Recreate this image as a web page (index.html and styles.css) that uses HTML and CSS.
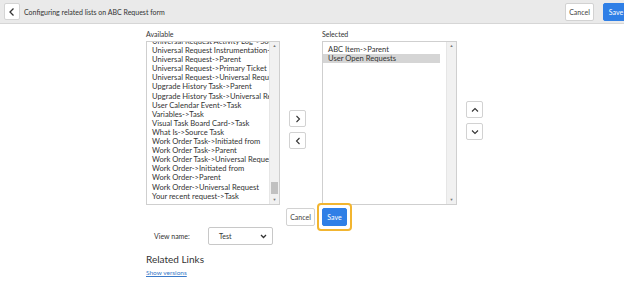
FILE: index.html
```html
<!DOCTYPE html>
<html>
<head>
    <title>Configuring related lists</title>
    <link rel="stylesheet" href="styles.css">
</head>
<body>
    <div class="header">
        <div class="back-btn">
            <svg width="8" height="10" viewBox="0 0 8 10"><path d="M5.5 1.5 L2 5 L5.5 8.5" fill="none" stroke="#333" stroke-width="1.3"/></svg>
        </div>
        <div class="title">Configuring related lists on ABC Request form</div>
        <div class="spacer"></div>
        <div class="btn btn-default">Cancel</div>
        <div class="btn btn-primary head-save">Save</div>
    </div>

    <div class="slushbucket">
        <div class="col col-available">
            <div class="col-label">Available</div>
            <div class="listbox">
                <div class="list">
                    <div class="list-inner scrolled">
                        <div class="item">Universal Request Activity Log->Source Task</div>
                        <div class="item">Universal Request Instrumentation->Primary Ticket</div>
                        <div class="item">Universal Request->Parent</div>
                        <div class="item">Universal Request->Primary Ticket</div>
                        <div class="item">Universal Request->Universal Request</div>
                        <div class="item">Upgrade History Task->Parent</div>
                        <div class="item">Upgrade History Task->Universal Request</div>
                        <div class="item">User Calendar Event->Task</div>
                        <div class="item">Variables->Task</div>
                        <div class="item">Visual Task Board Card->Task</div>
                        <div class="item">What Is->Source Task</div>
                        <div class="item">Work Order Task->Initiated from</div>
                        <div class="item">Work Order Task->Parent</div>
                        <div class="item">Work Order Task->Universal Request</div>
                        <div class="item">Work Order->Initiated from</div>
                        <div class="item">Work Order->Parent</div>
                        <div class="item">Work Order->Universal Request</div>
                        <div class="item">Your recent request->Task</div>
                    </div>
                </div>
                <div class="scrollbar">
                    <div class="sb-arrow">&#9650;</div>
                    <div class="sb-track"><div class="sb-thumb"></div></div>
                    <div class="sb-arrow">&#9660;</div>
                </div>
            </div>
        </div>

        <div class="move-btns">
            <div class="icon-btn">
                <svg width="8" height="8" viewBox="0 0 8 8"><path d="M2.5 1 L5.5 4 L2.5 7" fill="none" stroke="#333" stroke-width="1.1"/></svg>
            </div>
            <div class="icon-btn">
                <svg width="8" height="8" viewBox="0 0 8 8"><path d="M5.5 1 L2.5 4 L5.5 7" fill="none" stroke="#333" stroke-width="1.1"/></svg>
            </div>
        </div>

        <div class="col col-selected">
            <div class="col-label">Selected</div>
            <div class="listbox">
                <div class="list">
                    <div class="list-inner">
                        <div class="item">ABC Item->Parent</div>
                        <div class="item active">User Open Requests</div>
                    </div>
                </div>
                <div class="scrollbar">
                    <div class="sb-arrow">&#9650;</div>
                    <div class="sb-track"></div>
                    <div class="sb-arrow">&#9660;</div>
                </div>
            </div>
        </div>

        <div class="order-btns">
            <div class="icon-btn">
                <svg width="8" height="8" viewBox="0 0 8 8"><path d="M1 5.5 L4 2.5 L7 5.5" fill="none" stroke="#333" stroke-width="1.1"/></svg>
            </div>
            <div class="icon-btn">
                <svg width="8" height="8" viewBox="0 0 8 8"><path d="M1 2.5 L4 5.5 L7 2.5" fill="none" stroke="#333" stroke-width="1.1"/></svg>
            </div>
        </div>
    </div>

    <div class="form-actions">
        <div class="btn btn-default">Cancel</div>
        <div class="focus-ring">
            <div class="btn btn-primary">Save</div>
        </div>
    </div>

    <div class="view-row">
        <div class="view-label">View name:</div>
        <div class="view-select">
            <span>Test</span>
            <svg width="7" height="5" viewBox="0 0 7 5"><path d="M1 1 L3.5 3.5 L6 1" fill="none" stroke="#333" stroke-width="1.3"/></svg>
        </div>
    </div>

    <div class="related">
        <div class="related-title">Related Links</div>
        <a class="related-link" href="#">Show versions</a>
    </div>
</body>
</html>
```

FILE: styles.css
```css
body {
    margin: 0;
    padding: 0;
    width: 624px;
    height: 284px;
    overflow: hidden;
    background: #fff;
    font-family: Lato, "Open Sans", sans-serif;
    color: #333;
}
.header {
    height: 24px;
    background: #eaeaea;
    border-bottom: 1px solid #d6d6d6;
    display: flex;
    align-items: center;
    padding-left: 4px;
    box-sizing: border-box;
}
.back-btn {
    width: 16px;
    height: 17px;
    background: #fff;
    border: 1px solid #d4d4d4;
    border-radius: 2px;
    display: flex;
    align-items: center;
    justify-content: center;
    box-sizing: border-box;
}
.title {
    margin-left: 4px;
    font-size: 7px;
    color: #333;
}
.spacer {
    flex: 1;
}
.btn {
    height: 18px;
    box-sizing: border-box;
    display: flex;
    align-items: center;
    justify-content: center;
    font-size: 7px;
    border-radius: 2px;
}
.btn-default {
    width: 29px;
    background: #fff;
    border: 1px solid #d2d2d2;
    color: #444;
}
.btn-primary {
    width: 25px;
    background: #2f7fe6;
    border: 1px solid #2f7fe6;
    color: #fff;
}
.head-save {
    margin-left: 9px;
    width: 26px;
    margin-right: -5px;
}
.slushbucket {
    display: flex;
    padding-left: 146px;
    margin-top: 3px;
}
.col-label {
    font-size: 7px;
    height: 14px;
    line-height: 14px;
    color: #333;
}
.col-available {
    width: 134px;
}
.col-selected {
    width: 135px;
    margin-left: 16px;
}
.listbox {
    height: 164px;
    border: 1px solid #cfcfcf;
    box-sizing: border-box;
    display: flex;
    background: #fff;
}
.list {
    flex: 1;
    overflow: hidden;
}
.list-inner {
    padding-top: 3px;
}
.list-inner.scrolled {
    margin-top: -8px;
}
.item {
    font-size: 7.6px;
    height: 9.1px;
    line-height: 9.1px;
    padding-left: 5px;
    white-space: nowrap;
    color: #333;
}
.item.active {
    background: #d5d5d5;
    margin-right: 6px;
}
.scrollbar {
    width: 9px;
    background: #f1f1f1;
    border-left: 1px solid #e6e6e6;
    display: flex;
    flex-direction: column;
}
.sb-arrow {
    height: 8px;
    font-size: 4px;
    line-height: 8px;
    text-align: center;
    color: #777;
}
.sb-track {
    flex: 1;
    display: flex;
    flex-direction: column;
    justify-content: flex-end;
    padding: 0 1px 2px;
}
.sb-thumb {
    height: 12px;
    background: #c1c1c1;
}
.move-btns {
    margin-left: 9px;
    padding-top: 83px;
    display: flex;
    flex-direction: column;
    gap: 5px;
}
.order-btns {
    margin-left: 9px;
    padding-top: 74px;
    display: flex;
    flex-direction: column;
    gap: 5px;
}
.icon-btn {
    width: 17px;
    height: 17px;
    border: 1px solid #d2d2d2;
    border-radius: 2px;
    box-sizing: border-box;
    display: flex;
    align-items: center;
    justify-content: center;
    background: #fff;
}
.form-actions {
    display: flex;
    align-items: center;
    padding-left: 286px;
    margin-top: -2px;
}
.focus-ring {
    margin-left: 2px;
    padding: 3px;
    border: 2px solid #f2b530;
    border-radius: 4px;
}
.view-row {
    display: flex;
    align-items: center;
    padding-left: 154px;
    margin-top: -4px;
}
.view-label {
    font-size: 7px;
    width: 54px;
    color: #333;
}
.view-select {
    width: 65px;
    height: 18px;
    border: 1px solid #c8c8c8;
    border-radius: 2px;
    box-sizing: border-box;
    display: flex;
    align-items: center;
    justify-content: space-between;
    padding: 0 5px 0 10px;
    font-size: 7px;
}
.related {
    padding-left: 146px;
    margin-top: 7px;
}
.related-title {
    font-size: 10px;
    color: #333;
    height: 14px;
    line-height: 14px;
}
.related-link {
    display: block;
    margin-top: 3px;
    font-size: 6.5px;
    color: #3a7ac8;
}
```
